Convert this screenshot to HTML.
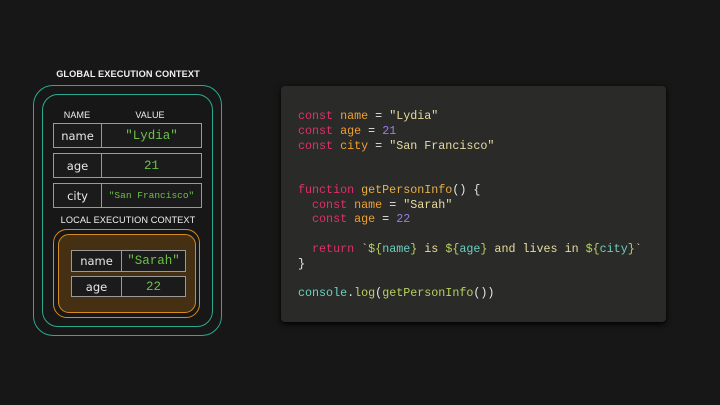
<!DOCTYPE html><html><head><style>
body{margin:0;width:720px;height:405px;background:#171717;position:relative;overflow:hidden;font-family:"Liberation Sans",sans-serif}
.a{position:absolute;box-sizing:border-box}
.t{position:absolute;color:#f0f0f0;font-size:9.2px;font-weight:bold;letter-spacing:0.1px;text-align:center}
.row{position:absolute;box-sizing:border-box;border:1px solid #9a9a9a;display:flex;background:#1b1b1b}
.row div{display:flex;align-items:center;justify-content:center;font-family:"DejaVu Sans",sans-serif;font-size:11.5px;color:#e8e8e8}
.row .v{border-left:1px solid #9a9a9a;flex:1;color:#6cc04a;font-family:"Liberation Mono",monospace;font-size:12.5px}
pre{position:absolute;left:298px;top:109px;margin:0;font-family:"Liberation Mono","DejaVu Sans Mono",monospace;font-size:11.7px;line-height:14.75px;color:#e6e6e6}
.k{color:#e0306a}.n{color:#f0a030}.s{color:#e8dca0}.num{color:#9b7ee8}.f{color:#e8b048}.c{color:#6ad0c0}.g{color:#b8d060}
</style></head><body>
<div class="t" style="left:28px;top:69px;width:200px">GLOBAL EXECUTION CONTEXT</div>
<div class="a" style="left:33px;top:85px;width:189px;height:251px;border:1.5px solid #2fa890;border-radius:20px"></div>
<div class="a" style="left:42px;top:94px;width:171px;height:233px;border:1.5px solid #2fa890;border-radius:16px"></div>
<div class="t" style="left:55px;top:110px;width:44px;font-weight:normal;font-size:9px">NAME</div>
<div class="t" style="left:120px;top:110px;width:60px;font-weight:normal;font-size:9px">VALUE</div>
<div class="row" style="left:53px;top:123px;width:149px;height:25px"><div style="width:47px">name</div><div class="v">"Lydia"</div></div>
<div class="row" style="left:53px;top:153px;width:149px;height:25px"><div style="width:47px">age</div><div class="v">21</div></div>
<div class="row" style="left:53px;top:183px;width:149px;height:25px"><div style="width:47px">city</div><div class="v" style="font-size:9.5px">"San Francisco"</div></div>
<div class="t" style="left:28px;top:215px;width:200px;font-weight:normal;font-size:9.2px">LOCAL EXECUTION CONTEXT</div>
<div class="a" style="left:53px;top:229px;width:147px;height:89px;border:1.5px solid #d88a20;border-radius:14px"></div>
<div class="a" style="left:58px;top:234px;width:138px;height:79px;border:1.5px solid #d88a20;border-radius:11px;background:#453014"></div>
<div class="row" style="left:71px;top:250px;width:115px;height:22px"><div style="width:49px">name</div><div class="v">"Sarah"</div></div>
<div class="row" style="left:71px;top:276px;width:115px;height:21px"><div style="width:49px">age</div><div class="v">22</div></div>
<div class="a" style="left:281px;top:86px;width:385px;height:236px;background:#2a2a28;border-radius:4px;box-shadow:0 2px 6px #000"></div>
<pre><span class="k">const</span> <span class="n">name</span> = <span class="s">"Lydia"</span>
<span class="k">const</span> <span class="n">age</span> = <span class="num">21</span>
<span class="k">const</span> <span class="n">city</span> = <span class="s">"San Francisco"</span>


<span class="k">function</span> <span class="f">getPersonInfo</span>() {
  <span class="k">const</span> <span class="n">name</span> = <span class="s">"Sarah"</span>
  <span class="k">const</span> <span class="n">age</span> = <span class="num">22</span>

  <span class="k">return</span> <span class="s">`</span><span class="g">${</span><span class="c">name</span><span class="g">}</span><span class="s"> is </span><span class="g">${</span><span class="c">age</span><span class="g">}</span><span class="s"> and lives in </span><span class="g">${</span><span class="c">city</span><span class="g">}</span><span class="s">`</span>
}

<span class="c">console</span>.<span class="g">log</span>(<span class="g">getPersonInfo</span>())</pre>
</body></html>
